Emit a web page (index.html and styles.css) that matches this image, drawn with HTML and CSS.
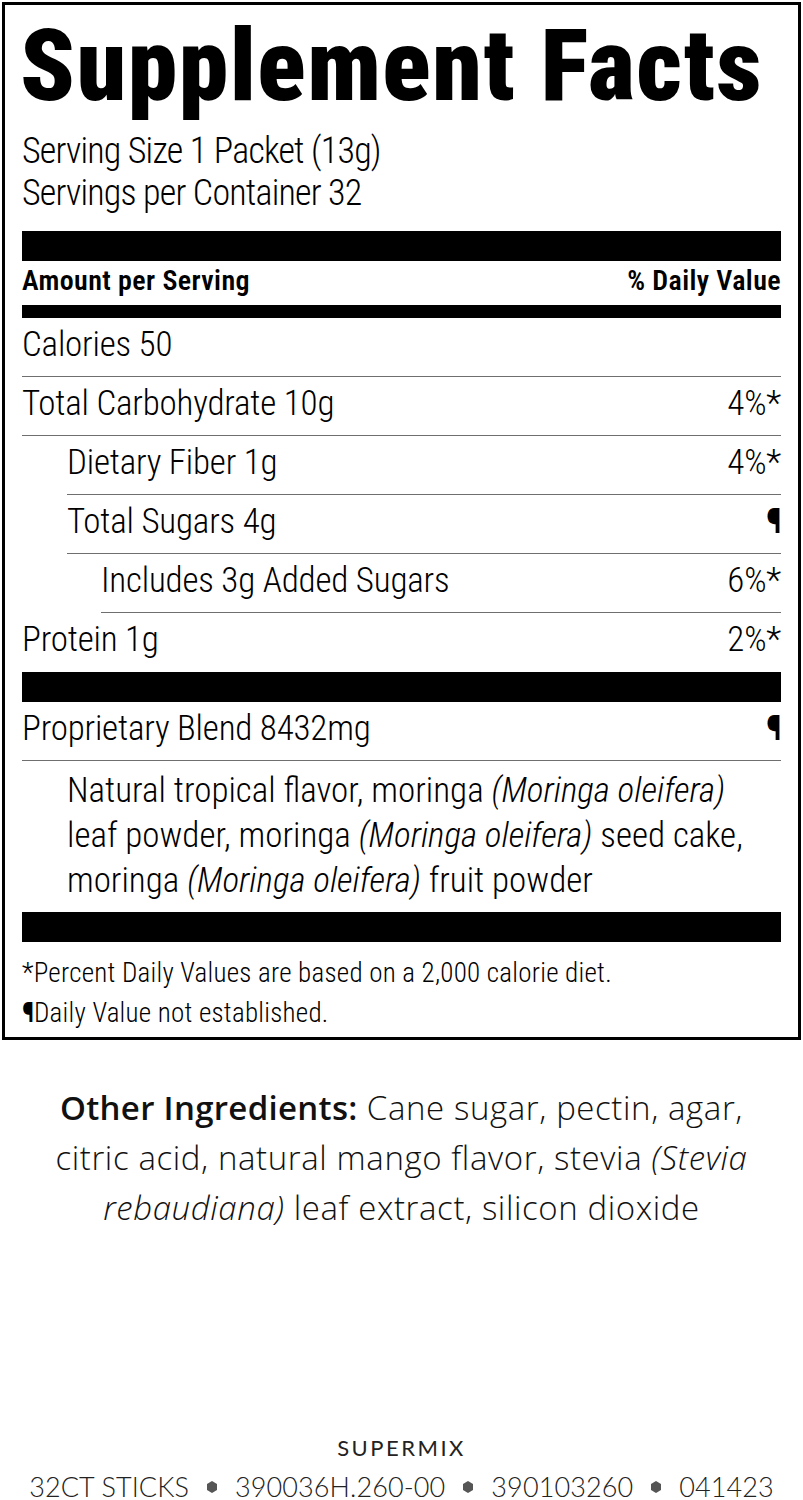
FILE: index.html
```html
<!DOCTYPE html>
<html>
<head>
<meta charset="utf-8">
<link rel="stylesheet" href="styles.css">
</head>
<body>
<div class="label">
  <h1 class="title">Supplement Facts</h1>
  <div class="serving">Serving Size 1 Packet (13g)</div>
  <div class="serving">Servings per Container 32</div>
  <div class="bar bar-thick bar-first"></div>
  <div class="hdr"><span>Amount per Serving</span><span>% Daily Value</span></div>
  <div class="bar bar-med"></div>
  <div class="row"><span>Calories 50</span><span></span></div>
  <div class="row"><span>Total Carbohydrate 10g</span><span>4%*</span></div>
  <div class="row ind1"><span>Dietary Fiber 1g</span><span>4%*</span></div>
  <div class="row ind1"><span>Total Sugars 4g</span><span class="pil">¶</span></div>
  <div class="row ind2"><span>Includes 3g Added Sugars</span><span>6%*</span></div>
  <div class="row last"><span>Protein 1g</span><span>2%*</span></div>
  <div class="bar bar-thick"></div>
  <div class="row"><span>Proprietary Blend 8432mg</span><span class="pil">¶</span></div>
  <div class="blend">Natural tropical flavor, moringa <i>(Moringa oleifera)</i><br>leaf powder, moringa <i>(Moringa oleifera)</i> seed cake,<br>moringa <i>(Moringa oleifera)</i> fruit powder</div>
  <div class="bar bar-thick"></div>
  <div class="foot">
    <div>*Percent Daily Values are based on a 2,000 calorie diet.</div>
    <div><span class="pil-s">¶</span>Daily Value not established.</div>
  </div>
</div>
<p class="other"><b>Other Ingredients:</b> Cane sugar, pectin, agar,<br>citric acid, natural mango flavor, stevia <i>(Stevia<br>rebaudiana)</i> leaf extract, silicon dioxide</p>
<div class="brand">SUPERMIX</div>
<div class="codes">
  <span>32CT STICKS</span>
  <svg class="hex" viewBox="0 0 10 12"><polygon points="5,0 10,3 10,9 5,12 0,9 0,3"/></svg>
  <span>390036H.260-00</span>
  <svg class="hex" viewBox="0 0 10 12"><polygon points="5,0 10,3 10,9 5,12 0,9 0,3"/></svg>
  <span>390103260</span>
  <svg class="hex" viewBox="0 0 10 12"><polygon points="5,0 10,3 10,9 5,12 0,9 0,3"/></svg>
  <span>041423</span>
</div>
</body>
</html>
```
FILE: styles.css
```css
html, body { margin: 0; padding: 0; background: #fff; }
body { width: 803px; height: 1500px; overflow: hidden; color: #000; font-family: Roboto, "Liberation Sans", sans-serif; font-stretch: 75%; font-weight: 300; }
.label { margin: 2px 2px 0 2px; border: 3px solid #000; padding: 0 17px; box-sizing: border-box; }
.title { margin: 0 0 14px -2px; padding-top: 11px; font-size: 100px; font-weight: 900; line-height: 100px; letter-spacing: 1.5px; white-space: nowrap; }
.serving { font-size: 36px; line-height: 42px; letter-spacing: -0.8px; white-space: nowrap; }
.bar { background: #000; }
.bar-thick { height: 30px; }
.bar-first { margin-top: 17px; }
.hdr { display: flex; justify-content: space-between; height: 44px; box-sizing: border-box; padding-bottom: 4px; line-height: 40px; font-size: 28px; font-weight: 600; letter-spacing: 0.4px; }
.bar-med { height: 13px; }
.row { display: flex; justify-content: space-between; height: 59px; box-sizing: border-box; padding-bottom: 4px; line-height: 54px; border-bottom: 1px solid #6f6f6f; font-size: 35px; letter-spacing: -0.2px; white-space: nowrap; }
.row.last { border-bottom-color: transparent; }
.ind1 { margin-left: 45px; }
.ind2 { margin-left: 79px; }
.pil { font-weight: 900; }
.blend { padding: 7px 0 9px 45px; font-size: 35px; line-height: 45px; white-space: nowrap; }
.blend i { font-style: italic; }
.foot { padding: 11px 0 4px 0; font-size: 27px; line-height: 40px; letter-spacing: 0.25px; white-space: nowrap; }
.pil-s { font-weight: 900; }
.other { margin: 43px 20px 0 20px; text-align: center; font-family: "Open Sans", Roboto, sans-serif; font-stretch: 100%; font-weight: 300; font-size: 33px; letter-spacing: 0.6px; line-height: 50px; color: #111; }
.other b { font-weight: 600; letter-spacing: 0.3px; }
.brand { margin-top: 201px; text-align: center; font-family: Lato, "Liberation Sans", sans-serif; font-weight: 400; font-stretch: 100%; font-size: 22px; letter-spacing: 2.5px; color: #222; line-height: 28px; }
.codes { margin-top: 10px; display: flex; justify-content: center; align-items: center; gap: 18px; font-family: Lato, "Liberation Sans", sans-serif; font-stretch: 100%; font-weight: 300; font-size: 27px; letter-spacing: 0.1px; color: #222; line-height: 30px; }
.hex { width: 10px; height: 12px; fill: #555; }
```
